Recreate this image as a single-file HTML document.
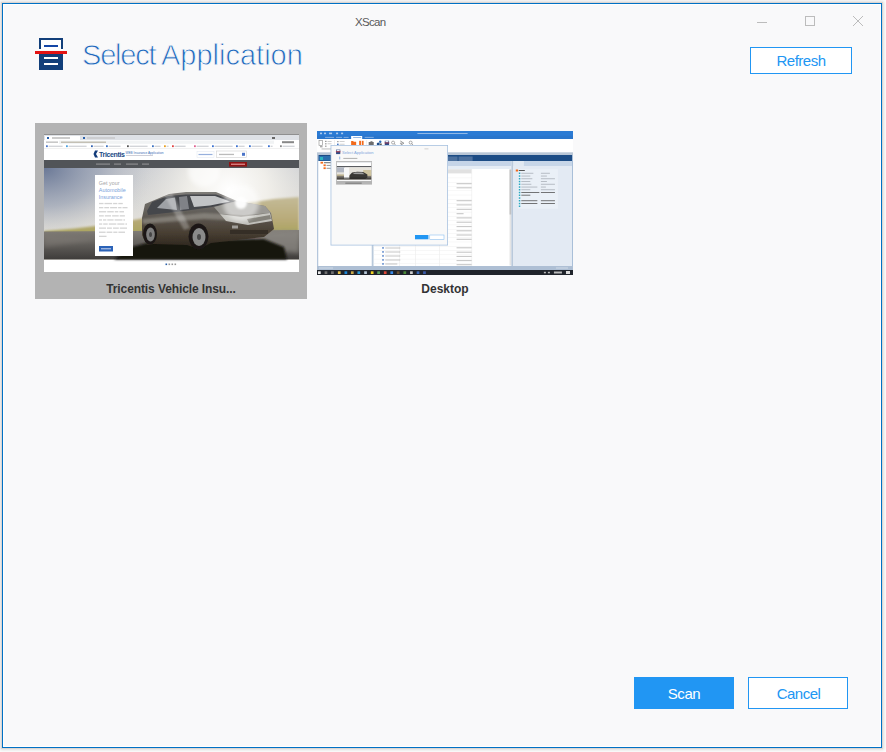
<!DOCTYPE html>
<html><head><meta charset="utf-8">
<style>
*{margin:0;padding:0;box-sizing:border-box}
html,body{width:886px;height:752px;overflow:hidden;background:#fdfdfd;font-family:"Liberation Sans",sans-serif}
.abs{position:absolute}
#win{position:absolute;left:2px;top:3px;width:880px;height:745px;border:1px solid #0071c5;background:#f9f9fa;box-shadow:0 0 0 1px #dcd6d2,0 0 3px 2px rgba(0,0,0,0.13)}
#inner{position:absolute;left:0;top:0;right:0;bottom:0;border:1px solid #fff}
.title{position:absolute;left:0;top:13px;width:100%;text-align:center;font-size:11px;color:#666}
.ctl{position:absolute;background:transparent}
.btn{position:absolute;border:1px solid #2196f3;background:#fff;color:#2196f3;font-size:15px;text-align:center}
.btnp{background:#2196f3;color:#fff}
.tile{position:absolute;background:#b3b3b3}
.lbl{position:absolute;font-weight:bold;font-size:12px;color:#333;text-align:center}
</style></head><body>
<div id="win"><div id="inner"></div></div>
<div class="abs m" style="left:355px;top:16px;font-size:11.5px;letter-spacing:-0.7px;color:#5a5a5a;white-space:nowrap">XScan</div>
<!-- window controls -->
<div class="abs" style="left:757px;top:22px;width:10px;height:1px;background:#bcbcbc"></div>
<div class="abs" style="left:805px;top:16px;width:10px;height:10px;border:1px solid #bcbcbc"></div>
<svg class="abs" style="left:852px;top:15px" width="12" height="12" viewBox="0 0 12 12"><path d="M1 1L11 11M11 1L1 11" stroke="#bcbcbc" stroke-width="1"/></svg>
<!-- icon -->
<svg class="abs" style="left:35px;top:38px" width="32" height="32" viewBox="0 0 32 32">
<rect x="4" y="0" width="24" height="12" fill="#fff"/>
<path d="M5 11V1H27V11" fill="none" stroke="#123f7a" stroke-width="2"/>
<rect x="9" y="7" width="14" height="2" fill="#1446a6"/>
<rect x="0" y="13" width="32" height="3" fill="#e31313"/>
<rect x="4" y="16" width="24" height="16" fill="#123f7a"/>
<rect x="9" y="19" width="14" height="2" fill="#fff"/>
<rect x="9" y="25" width="14" height="2" fill="#fff"/>
</svg>
<div class="abs m" id="ttl" style="left:82px;top:39px;font-size:29px;color:#1f68bd;white-space:nowrap;-webkit-text-stroke:0.8px #f9f9fa"><span style="letter-spacing:-1.2px">Select</span></div>
<div class="abs m" id="ttl2" style="left:161px;top:39px;font-size:29px;color:#1f68bd;white-space:nowrap;-webkit-text-stroke:0.8px #f9f9fa;letter-spacing:0px">Application</div>
<div class="btn m" style="left:750px;top:47px;width:102px;height:27px;line-height:25px;letter-spacing:-0.5px">Refresh</div>

<!-- tile 1 -->
<div class="tile" style="left:35px;top:123px;width:272px;height:176px"></div>
<svg class="abs" style="left:44px;top:134px" width="255" height="138" viewBox="0 -1 255 138">
<rect x="0" y="-1" width="255" height="1" fill="#8f8f8f"/>
<defs>
<linearGradient id="sky" x1="0" y1="0" x2="0" y2="1">
<stop offset="0" stop-color="#c9ccd2"/><stop offset="0.6" stop-color="#e2e0da"/><stop offset="1" stop-color="#ece6d6"/>
</linearGradient>
<radialGradient id="skyl" cx="0" cy="33" r="110" gradientUnits="userSpaceOnUse" gradientTransform="translate(0 33) scale(1 0.7) translate(0 -33)">
<stop offset="0" stop-color="#6a7896" stop-opacity="1"/><stop offset="0.5" stop-color="#8e98ad" stop-opacity="0.6"/><stop offset="1" stop-color="#c8c8c8" stop-opacity="0"/>
</radialGradient>
<radialGradient id="sun" cx="185" cy="55" r="95" gradientUnits="userSpaceOnUse">
<stop offset="0" stop-color="#ffffff" stop-opacity="1"/><stop offset="0.4" stop-color="#f6f4ee" stop-opacity="0.85"/><stop offset="1" stop-color="#eeeae0" stop-opacity="0"/>
</radialGradient>
<linearGradient id="road" x1="0" y1="0" x2="0" y2="1">
<stop offset="0" stop-color="#827e78"/><stop offset="1" stop-color="#3e3c3a"/>
</linearGradient>
<linearGradient id="hill" x1="0" y1="0" x2="0" y2="1">
<stop offset="0" stop-color="#c4bb98"/><stop offset="0.6" stop-color="#b8aa78"/><stop offset="1" stop-color="#a9a45c"/>
</linearGradient>
<linearGradient id="body" x1="0" y1="0" x2="0" y2="1">
<stop offset="0" stop-color="#7e7c78"/><stop offset="0.4" stop-color="#5e5a54"/><stop offset="0.7" stop-color="#4a4034"/><stop offset="1" stop-color="#2a231b"/>
</linearGradient>
<clipPath id="heroclip"><rect x="0" y="33.2" width="255" height="91.3"/></clipPath>
<filter id="bl0"><feGaussianBlur stdDeviation="0.45"/></filter>
<filter id="bl1"><feGaussianBlur stdDeviation="0.8"/></filter>
<filter id="bl2"><feGaussianBlur stdDeviation="2"/></filter>
</defs>
<rect width="255" height="137" fill="#fff"/>
<!-- tab strip -->
<rect x="0" y="0" width="255" height="5" fill="#dee1e6"/>

<rect x="1" y="1" width="35" height="4" fill="#fff"/>
<rect x="3" y="2" width="2" height="2" fill="#2a5fa8"/>
<rect x="8" y="2.5" width="18" height="1" fill="#999"/>
<rect x="39" y="2" width="2" height="2" fill="#2a5fa8"/>
<rect x="43" y="2.5" width="28" height="1" fill="#bbb"/>
<rect x="228" y="2" width="3" height="2" fill="#666"/>
<!-- address row -->
<rect x="0" y="5" width="255" height="4.5" fill="#fff"/>
<rect x="2" y="6.5" width="12" height="1.3" fill="#bbb"/>
<rect x="15" y="5.6" width="215" height="3.2" fill="#f1f3f4"/>
<rect x="17" y="6.6" width="45" height="1.2" fill="#b9b4a6"/>
<rect x="238" y="6.2" width="12" height="2" fill="#888"/>
<!-- bookmarks -->
<rect x="2" y="10.3" width="1.8" height="1.8" fill="#4a74c8"/>
<rect x="4.6" y="10.7" width="14" height="1.1" fill="#9aa0aa" opacity="0.55"/>
<rect x="22" y="10.3" width="1.8" height="1.8" fill="#4aa0e0"/>
<rect x="24.6" y="10.7" width="18" height="1.1" fill="#9aa0aa" opacity="0.55"/>
<rect x="47" y="10.3" width="1.8" height="1.8" fill="#3060b0"/>
<rect x="49.6" y="10.7" width="10" height="1.1" fill="#9aa0aa" opacity="0.55"/>
<rect x="62" y="10.3" width="1.8" height="1.8" fill="#3a70c0"/>
<rect x="64.6" y="10.7" width="12" height="1.1" fill="#9aa0aa" opacity="0.55"/>
<rect x="83" y="10.3" width="1.8" height="1.8" fill="#555"/>
<rect x="85.6" y="10.7" width="18" height="1.1" fill="#9aa0aa" opacity="0.55"/>
<rect x="108" y="10.3" width="1.8" height="1.8" fill="#3a70c0"/>
<rect x="110.6" y="10.7" width="6" height="1.1" fill="#9aa0aa" opacity="0.55"/>
<rect x="120" y="10.3" width="1.8" height="1.8" fill="#e8a020"/>
<rect x="122.6" y="10.7" width="2" height="1.1" fill="#9aa0aa" opacity="0.55"/>
<rect x="128" y="10.3" width="1.8" height="1.8" fill="#e04040"/>
<rect x="130.6" y="10.7" width="11" height="1.1" fill="#9aa0aa" opacity="0.55"/>
<rect x="150" y="10.3" width="1.8" height="1.8" fill="#e06090"/>
<rect x="152.6" y="10.7" width="12" height="1.1" fill="#9aa0aa" opacity="0.55"/>
<rect x="168" y="10.3" width="1.8" height="1.8" fill="#3a70d0"/>
<rect x="170.6" y="10.7" width="18" height="1.1" fill="#9aa0aa" opacity="0.55"/>
<rect x="192" y="10.3" width="1.8" height="1.8" fill="#3a70d0"/>
<rect x="194.6" y="10.7" width="6" height="1.1" fill="#9aa0aa" opacity="0.55"/>
<rect x="205" y="10.3" width="1.8" height="1.8" fill="#3a70d0"/>
<rect x="207.6" y="10.7" width="11" height="1.1" fill="#9aa0aa" opacity="0.55"/>
<rect x="224" y="10.3" width="1.8" height="1.8" fill="#3a70d0"/>
<rect x="226.6" y="10.7" width="2" height="1.1" fill="#9aa0aa" opacity="0.55"/>
<rect x="236" y="10.3" width="1.8" height="1.8" fill="#888"/>
<rect x="238.6" y="10.7" width="12" height="1.1" fill="#9aa0aa" opacity="0.55"/>
<rect x="0" y="13.3" width="255" height="0.5" fill="#e2e2e2"/>
<!-- header -->
<path d="M51 15.5 L54 15.5 L52 19 L54 22.5 L51 22.5 L49.5 19 Z" fill="#123b7a"/>
<text x="55" y="21.8" font-family="Liberation Sans" font-weight="bold" font-size="7" fill="#1b4a86" letter-spacing="-0.35">Tricentis</text>
<text x="81.5" y="18.6" font-family="Liberation Sans" font-size="3.15" fill="#3b6cb5">WEB Insurance Application</text>
<rect x="82" y="20" width="27" height="0.8" fill="#aab" opacity="0.7"/>
<rect x="153" y="16.5" width="17" height="6" fill="#fff" stroke="#dfe6f0" stroke-width="0.5"/>
<rect x="154.5" y="18.9" width="14" height="1.2" fill="#6b8fcf" opacity="0.7"/>
<rect x="172.5" y="16" width="30" height="6.5" fill="#fff" stroke="#d0d0d0" stroke-width="0.6"/>
<rect x="175" y="18.8" width="15" height="1.3" fill="#bbb"/>
<rect x="198" y="17.8" width="3" height="3" fill="#4a74c8"/>
<!-- nav -->
<rect x="0" y="25" width="255" height="8.2" fill="#515458"/>
<rect x="52" y="28.5" width="14" height="1.2" fill="#a4a4a4" opacity="0.7"/>
<rect x="70" y="28.5" width="7" height="1.2" fill="#a4a4a4" opacity="0.7"/>
<rect x="82" y="28.5" width="12" height="1.2" fill="#a4a4a4" opacity="0.7"/>
<rect x="98" y="28.5" width="7" height="1.2" fill="#a4a4a4" opacity="0.7"/>
<rect x="185" y="27" width="18" height="4.6" fill="#8e1414"/>
<rect x="187" y="28.6" width="14" height="1.3" fill="#d88"/>
<!-- hero -->
<rect x="0" y="33" width="255" height="91.5" fill="url(#sky)"/>
<rect x="0" y="33" width="255" height="91.5" fill="url(#skyl)"/>
<rect x="0" y="33" width="255" height="91.5" fill="url(#sun)"/>
<path d="M0 96 L30 93.5 L60 90 L95 84 L140 76 L190 70 L230 64 L255 62 L255 100 L0 100 Z" fill="url(#hill)" filter="url(#bl1)"/>

<path d="M0 96.5 L255 95 L255 124.5 L0 124.5 Z" fill="url(#road)"/>
<path d="M160 97 L255 96 L255 118 L200 112Z" fill="#8d8a85" opacity="0.7" filter="url(#bl2)"/>
<path d="M0 100 L60 104 L0 112Z" fill="#8a8580" opacity="0.4" filter="url(#bl2)"/>
<!-- car shadow -->
<path d="M88 112 L110 106 L220 104 L240 112 L243 124.5 L70 124.5 Z" fill="#161310" filter="url(#bl1)"/>
<g filter="url(#bl0)">
<!-- car body -->
<path d="M98 83 L101 69 L125 59 L142 57 L172 57 L193 66 L221 71 L227 78 L230 94 L220 102 L167 108 L155 114 L143 110 L110 109 L103 110 L98 100 Z" fill="url(#body)"/>
<path d="M98 84 L160 78 L200 80 L227 78 L228 84 L200 86 L160 84 L99 89Z" fill="#a8a59e" opacity="0.5" filter="url(#bl1)"/>
<!-- windows -->
<path d="M103 76 L108 67 L124 61 L142 59.5 L172 59.5 L191 66.5 L168 72 L140 76 L104 80 Z" fill="#45474c"/>
<path d="M146 61 L171 61 L186 66.5 L166 70.5 L150 72Z" fill="#d8dadc" opacity="0.85"/>
<path d="M113 73 L122 64 L131 62.5 L133 75Z" fill="#c5c8cc" opacity="0.7"/>
<path d="M135 62 L143 61 L145 74 L136 75Z" fill="#8e9196" opacity="0.8"/>
<!-- hood / front -->
<path d="M170 72 L193 66 L221 71 L227 78 L200 80 L176 79Z" fill="#a09e9a" opacity="0.9"/>
<path d="M176 79 L197 82 L226 78 L228 86 L204 90 L182 86Z" fill="#d4d3cf" opacity="0.85"/>
<path d="M203 84 L226 80 L227 84 L205 88Z" fill="#6a665e" opacity="0.7"/>
<rect x="186" y="95" width="38" height="4" fill="#2f2a24" opacity="0.8"/>
<rect x="188" y="90.5" width="6" height="3" fill="#d8d8d8" opacity="0.6"/>
<!-- wheels -->
<ellipse cx="106" cy="99" rx="7" ry="10.5" fill="#1b1916"/>
<ellipse cx="106.5" cy="99.5" rx="4.3" ry="7" fill="#7e7e7e"/>
<ellipse cx="106.5" cy="99.5" rx="1.5" ry="2.5" fill="#444"/>
<ellipse cx="154.5" cy="101.5" rx="10" ry="13" fill="#1b1916"/>
<ellipse cx="155" cy="102" rx="6.5" ry="9" fill="#8a8a8a"/>
<ellipse cx="155" cy="102" rx="2" ry="3" fill="#4a4a4a"/>
</g>
<g clip-path="url(#heroclip)">
<!-- glare -->
<circle cx="160" cy="36" r="16" fill="#fff" opacity="0.6" filter="url(#bl2)"/>
<circle cx="197" cy="68" r="18" fill="#fff" opacity="0.5" filter="url(#bl2)"/>
<circle cx="197" cy="68" r="6" fill="#fff" opacity="0.95" filter="url(#bl1)"/>
<path d="M120 60 L140 95 L146 93 L128 58Z" fill="#fff" opacity="0.25" filter="url(#bl1)"/>
</g>
<!-- card -->
<rect x="51" y="40" width="38" height="81" fill="#fff"/>
<text x="54.8" y="49.5" font-family="Liberation Sans" font-size="5.4" fill="#a5a5a5">Get your</text>
<text x="54.8" y="56.5" font-family="Liberation Sans" font-size="5.4" fill="#7ba2da">Automobile</text>
<text x="54.8" y="63.5" font-family="Liberation Sans" font-size="5.4" fill="#7ba2da">Insurance</text>
<g fill="#9a9a9a" opacity="0.42">
<rect x="55.0" y="67.9" width="4.5" height="1.3"/>
<rect x="60.5" y="67.9" width="7.6" height="1.3"/>
<rect x="69.1" y="67.9" width="4.2" height="1.3"/>
<rect x="74.3" y="67.9" width="4.5" height="1.3"/>
<rect x="55.0" y="72.0" width="4.3" height="1.3"/>
<rect x="60.3" y="72.0" width="4.8" height="1.3"/>
<rect x="66.1" y="72.0" width="7.0" height="1.3"/>
<rect x="74.1" y="72.0" width="3.4" height="1.3"/>
<rect x="78.5" y="72.0" width="5.0" height="1.3"/>
<rect x="55.0" y="76.1" width="7.2" height="1.3"/>
<rect x="63.2" y="76.1" width="6.6" height="1.3"/>
<rect x="70.8" y="76.1" width="3.5" height="1.3"/>
<rect x="75.4" y="76.1" width="4.6" height="1.3"/>
<rect x="55.0" y="80.2" width="4.8" height="1.3"/>
<rect x="60.8" y="80.2" width="6.2" height="1.3"/>
<rect x="68.1" y="80.2" width="6.6" height="1.3"/>
<rect x="75.7" y="80.2" width="5.2" height="1.3"/>
<rect x="55.0" y="84.3" width="3.0" height="1.3"/>
<rect x="59.0" y="84.3" width="3.3" height="1.3"/>
<rect x="63.3" y="84.3" width="6.3" height="1.3"/>
<rect x="70.6" y="84.3" width="7.8" height="1.3"/>
<rect x="79.4" y="84.3" width="1.6" height="1.3"/>
<rect x="55.0" y="88.4" width="3.2" height="1.3"/>
<rect x="59.2" y="88.4" width="4.5" height="1.3"/>
<rect x="64.8" y="88.4" width="7.5" height="1.3"/>
<rect x="73.3" y="88.4" width="7.1" height="1.3"/>
<rect x="81.4" y="88.4" width="1.6" height="1.3"/>
<rect x="55.0" y="92.5" width="7.0" height="1.3"/>
<rect x="63.0" y="92.5" width="4.9" height="1.3"/>
<rect x="69.0" y="92.5" width="5.8" height="1.3"/>
<rect x="75.8" y="92.5" width="7.2" height="1.3"/>
<rect x="55.0" y="96.6" width="6.6" height="1.3"/>
<rect x="62.6" y="96.6" width="5.7" height="1.3"/>
<rect x="69.3" y="96.6" width="4.1" height="1.3"/>
<rect x="74.4" y="96.6" width="6.6" height="1.3"/>
<rect x="55.0" y="100.7" width="7.5" height="1.3"/>
</g>
<rect x="55" y="111" width="14" height="5.5" fill="#2c63b8"/>
<rect x="57" y="113.3" width="10" height="1" fill="#cdd8ee"/>
<!-- footer dots -->
<rect x="121.5" y="128.5" width="1.6" height="1.6" fill="#2a5fa8"/>
<rect x="124.5" y="128.5" width="1.6" height="1.6" fill="#999"/>
<rect x="127.5" y="128.5" width="1.6" height="1.6" fill="#999"/>
<rect x="130.5" y="128.5" width="1.6" height="1.6" fill="#999"/>
</svg>

<div class="lbl m" style="left:35px;top:282px;width:272px;letter-spacing:-0.1px">Tricentis Vehicle Insu...</div>

<!-- tile 2 -->
<svg class="abs" style="left:317px;top:131px" width="256" height="144" viewBox="0 0 255 144" preserveAspectRatio="none">
<rect width="255" height="144" fill="#fff"/>
<!-- title bar -->
<rect x="0" y="0" width="255" height="8" fill="#2b7bd4"/>
<rect x="0" y="4.8" width="255" height="3.2" fill="#2a76cc"/>
<rect x="34" y="5" width="11" height="3" fill="#fff"/>
<g fill="#cfe0f5" opacity="0.8"><rect x="3" y="1.6" width="2" height="1.6"/><rect x="7" y="1.6" width="2" height="1.6"/><rect x="12" y="1.6" width="3" height="1.6"/><rect x="19" y="1.6" width="2" height="1.6"/><rect x="24" y="1.6" width="2" height="1.6"/></g>
<rect x="100" y="2" width="50" height="1" fill="#bcd3f0" opacity="0.7"/>
<g fill="#cfe0f5" opacity="0.6"><rect x="8" y="5.9" width="9" height="0.9"/><rect x="19" y="5.9" width="6" height="0.9"/><rect x="26.5" y="5.9" width="5" height="0.9"/><rect x="47.5" y="5.9" width="9" height="0.9"/></g><rect x="36" y="6" width="8" height="0.8" fill="#7aa6dc"/>
<!-- ribbon -->
<rect x="0" y="8" width="255" height="13.3" fill="#fff"/>
<rect x="2" y="9.3" width="3.5" height="5" fill="none" stroke="#8a8a8a" stroke-width="0.6"/>
<rect x="3" y="14.8" width="2.5" height="1.6" fill="#aaa"/>
<g fill="#9a9a9a"><rect x="8" y="9.8" width="1.5" height="1.2"/><rect x="8" y="12.2" width="1.5" height="1.2"/><rect x="8" y="14.6" width="1.5" height="1.2"/><rect x="10.5" y="10" width="4" height="0.8" opacity="0.6"/><rect x="10.5" y="12.4" width="4" height="0.8" opacity="0.6"/></g>
<rect x="4.5" y="17.5" width="10" height="0.9" fill="#b5b5b5"/>
<g fill="#e2e2e2"><rect x="17" y="9" width="0.5" height="11"/><rect x="49" y="9" width="0.5" height="6"/><rect x="71" y="9" width="0.5" height="6"/></g>
<g fill="#a0a0a0"><rect x="20" y="10" width="1.5" height="1.2"/><rect x="22.5" y="10.2" width="5" height="0.8" opacity="0.6"/><rect x="20" y="12.6" width="1.5" height="1.5" fill="#3a6fc0"/><rect x="22.5" y="12.8" width="5" height="0.8" opacity="0.6"/></g>
<path d="M34 10 L36 10 L36.6 10.8 L39 10.8 L39 14.3 L34 14.3Z" fill="#f26a1b"/>
<rect x="42" y="9.8" width="1.8" height="4.5" fill="#f26a1b"/><rect x="44.6" y="9.8" width="1.8" height="4.5" fill="#f26a1b"/>
<path d="M51.5 11 L53 11 L53.5 10.2 L55 10.2 L55.5 11 L56.5 11 L56.5 14.3 L51.5 14.3Z" fill="#6e6e6e"/>
<circle cx="61" cy="13" r="1.5" fill="#1f4e8a"/><circle cx="63" cy="10.8" r="1.2" fill="#2a6ab8"/><rect x="62.5" y="12.5" width="2" height="2" fill="#555"/>
<rect x="67.5" y="9.8" width="4.3" height="4.6" fill="#2d4e8a"/><rect x="67.3" y="11.6" width="4.7" height="0.7" fill="#d82020"/><rect x="68.2" y="10" width="2.9" height="1.2" fill="#e8eef8"/>
<circle cx="75.8" cy="11.6" r="1.5" fill="none" stroke="#777" stroke-width="0.6"/><path d="M76.8 12.6 L78.6 14.4" stroke="#777" stroke-width="0.7"/>
<path d="M83 10 L86.5 12.2 L83 14.4" fill="none" stroke="#777" stroke-width="0.8"/><rect x="82.6" y="11.8" width="2" height="0.8" fill="#777"/>
<circle cx="93.3" cy="11.6" r="1.5" fill="none" stroke="#777" stroke-width="0.6"/><path d="M94.3 12.6 L96.1 14.4" stroke="#777" stroke-width="0.7"/>
<!-- gray band -->
<rect x="0" y="21.3" width="255" height="2.8" fill="#b9c6d6"/>
<!-- navy bar -->
<rect x="1" y="24" width="254" height="6" fill="#1c4c85"/>
<rect x="130" y="25.5" width="10" height="4.5" fill="#5a7ba4" opacity="0.8"/>
<rect x="141" y="25.5" width="14" height="4.5" fill="#5a7ba4" opacity="0.8"/>
<!-- left panel -->
<rect x="0" y="24" width="1.5" height="111" fill="#b4c6dc"/>
<rect x="1.5" y="30" width="53.5" height="105" fill="#fff"/>
<rect x="2" y="25" width="11" height="4.5" fill="#2a6fae"/>
<rect x="3" y="26" width="3" height="3" fill="#2bb3c0"/>
<rect x="3.5" y="30.8" width="2.6" height="1.8" fill="#f26a1b"/>
<rect x="7" y="31.3" width="7" height="0.9" fill="#555"/>
<rect x="6.5" y="33.4" width="2.2" height="1.8" fill="#f26a1b"/><rect x="9.5" y="33.9" width="5" height="0.9" fill="#888"/>
<rect x="6.5" y="36.3" width="2.2" height="1.8" fill="#f26a1b"/><rect x="9.5" y="36.8" width="5" height="0.9" fill="#888"/>
<!-- separator -->
<rect x="54.5" y="30" width="2" height="105" fill="#b9c9db"/>
<!-- center grid -->
<rect x="56.5" y="30" width="137" height="5" fill="#c6d5e8"/>
<rect x="56.5" y="35" width="137" height="3.2" fill="#e6edf5"/>
<rect x="56.5" y="38.2" width="137" height="96.8" fill="#fff"/>
<rect x="122" y="38.2" width="32" height="4" fill="#e1e1e1"/>
<g fill="#e8e8e8"><rect x="82" y="38" width="0.5" height="97"/><rect x="98" y="38" width="0.5" height="97"/><rect x="122" y="38" width="0.5" height="97"/><rect x="154" y="38" width="0.5" height="97"/></g>
<g fill="#ececec">
<rect x="56.5" y="38.20" width="98" height="0.4"/>
<rect x="56.5" y="42.47" width="98" height="0.4"/>
<rect x="56.5" y="46.74" width="98" height="0.4"/>
<rect x="56.5" y="51.01" width="98" height="0.4"/>
<rect x="56.5" y="55.28" width="98" height="0.4"/>
<rect x="56.5" y="59.55" width="98" height="0.4"/>
<rect x="56.5" y="63.82" width="98" height="0.4"/>
<rect x="56.5" y="68.09" width="98" height="0.4"/>
<rect x="56.5" y="72.36" width="98" height="0.4"/>
<rect x="56.5" y="76.63" width="98" height="0.4"/>
<rect x="56.5" y="80.90" width="98" height="0.4"/>
<rect x="56.5" y="85.17" width="98" height="0.4"/>
<rect x="56.5" y="89.44" width="98" height="0.4"/>
<rect x="56.5" y="93.71" width="98" height="0.4"/>
<rect x="56.5" y="97.98" width="98" height="0.4"/>
<rect x="56.5" y="102.25" width="98" height="0.4"/>
<rect x="56.5" y="106.52" width="98" height="0.4"/>
<rect x="56.5" y="110.79" width="98" height="0.4"/>
<rect x="56.5" y="115.06" width="98" height="0.4"/>
<rect x="56.5" y="119.33" width="98" height="0.4"/>
<rect x="56.5" y="123.60" width="98" height="0.4"/>
<rect x="56.5" y="127.87" width="98" height="0.4"/>
<rect x="56.5" y="132.14" width="98" height="0.4"/>
</g>
<g fill="#7a7a7a" opacity="0.45">
<rect x="139" y="52.2" width="15" height="1"/>
<rect x="139" y="56.3" width="15" height="1"/>
<rect x="139" y="69.2" width="15" height="1"/>
<rect x="139" y="73.4" width="15" height="1"/>
<rect x="139" y="77.8" width="15" height="1"/>
<rect x="139" y="82.2" width="7" height="1"/>
<rect x="139" y="86.4" width="15" height="1"/>
<rect x="139" y="90.7" width="15" height="1"/>
<rect x="139" y="95.1" width="15" height="1"/>
<rect x="139" y="99.3" width="15" height="1"/>
<rect x="139" y="103.5" width="15" height="1"/>
<rect x="139" y="107.8" width="15" height="1"/>
<rect x="139" y="116.3" width="15" height="1"/>
<rect x="139" y="120.7" width="15" height="1"/>
<rect x="139" y="124.9" width="15" height="1"/>
<rect x="139" y="129.1" width="15" height="1"/>
<rect x="139" y="133.2" width="15" height="1"/>
</g>
<g fill="#8a8a8a" opacity="0.5">
<rect x="68" y="116.5" width="15" height="1"/><rect x="68" y="120.5" width="15" height="1"/><rect x="68" y="124.5" width="15" height="1"/><rect x="68" y="128.5" width="15" height="1"/><rect x="68" y="132.5" width="12" height="1"/>
</g>
<g fill="#3a6fc0" opacity="0.8">
<rect x="65" y="116" width="1.5" height="1.8"/><rect x="65" y="120" width="1.5" height="1.8"/><rect x="65" y="124" width="1.5" height="1.8"/><rect x="65" y="128" width="1.5" height="1.8"/><rect x="65" y="132" width="1.5" height="1.8"/>
</g>
<rect x="191.8" y="38.5" width="1.8" height="96" fill="#e4e4e4"/>
<rect x="191.8" y="38.5" width="1.8" height="45" fill="#c2c2c2"/>
<!-- right panel -->
<rect x="193.6" y="30" width="2" height="105" fill="#b9c9db"/>
<rect x="195.6" y="30" width="58.4" height="105" fill="#e3eaf3"/>
<rect x="195.6" y="30" width="58.4" height="5" fill="#c7d6e8"/>
<rect x="195.6" y="30" width="10.5" height="5" fill="#e1e9f2"/>
<rect x="200" y="38.2" width="40" height="39.5" fill="#eaf0f7"/>
<rect x="198" y="38.5" width="2.3" height="2" fill="#f26a1b"/>
<rect x="201" y="39" width="6" height="1" fill="#555"/>
<g fill="#2aa8c0">
<rect x="201" y="41.5" width="1.5" height="1.5"/><rect x="201" y="44.3" width="1.5" height="1.5"/><rect x="201" y="47" width="1.5" height="1.5"/><rect x="201" y="49.8" width="1.5" height="1.5"/><rect x="201" y="52.5" width="1.5" height="1.5"/><rect x="201" y="55.3" width="1.5" height="1.5"/><rect x="201" y="58" width="1.5" height="1.5"/><rect x="201" y="60.8" width="1.5" height="1.5"/><rect x="201" y="63.5" width="1.5" height="1.5"/><rect x="201" y="66.3" width="1.5" height="1.5"/><rect x="201" y="69" width="1.5" height="1.5"/><rect x="201" y="71.8" width="1.5" height="1.5"/><rect x="201" y="74.5" width="1.5" height="1.5"/>
</g>
<g fill="#9aa0a8" opacity="0.7">
<rect x="203.5" y="41.8" width="12" height="0.9"/><rect x="203.5" y="44.6" width="9" height="0.9"/><rect x="203.5" y="47.3" width="11" height="0.9"/><rect x="203.5" y="50.1" width="9" height="0.9"/><rect x="203.5" y="52.8" width="10" height="0.9"/><rect x="203.5" y="55.6" width="16" height="0.9"/><rect x="203.5" y="58.3" width="9" height="0.9"/>
<rect x="223" y="41.8" width="9" height="0.9"/><rect x="223" y="44.6" width="6" height="0.9"/><rect x="223" y="47.3" width="14" height="0.9"/><rect x="223" y="50.1" width="6" height="0.9"/><rect x="223" y="52.8" width="14" height="0.9"/><rect x="223" y="55.6" width="5" height="0.9"/><rect x="223" y="58.3" width="14" height="0.9"/>
</g>
<g fill="#555" opacity="0.8">
<rect x="203.5" y="61" width="18" height="1"/><rect x="203.5" y="63.7" width="9" height="1"/><rect x="203.5" y="69.2" width="16" height="1"/><rect x="203.5" y="72" width="16" height="1"/>
<rect x="223" y="61" width="14" height="1"/><rect x="223" y="69.2" width="14" height="1"/><rect x="223" y="72" width="14" height="1"/>
</g>
<rect x="254" y="24" width="1" height="111" fill="#a9bfd8"/>
<!-- status bar -->
<rect x="0" y="135" width="255" height="4" fill="#aebfd4"/>
<rect x="2" y="136.5" width="14" height="1" fill="#e8eef6" opacity="0.6"/>
<rect x="238" y="136.5" width="12" height="1" fill="#e8eef6" opacity="0.6"/>
<!-- taskbar -->
<rect x="0" y="139" width="255" height="5" fill="#20242b"/>
<rect x="1.0" y="140.3" width="2.7" height="2.7" fill="#e8e8e8"/>
<rect x="7.6" y="140.3" width="2.7" height="2.7" fill="#707070"/>
<rect x="14.0" y="140.3" width="2.7" height="2.7" fill="#707070"/>
<rect x="20.8" y="140.3" width="2.7" height="2.7" fill="#e8c048"/>
<rect x="27.4" y="140.3" width="2.7" height="2.7" fill="#1e88d8"/>
<rect x="33.8" y="140.3" width="2.7" height="2.7" fill="#c8a848"/>
<rect x="40.3" y="140.3" width="2.7" height="2.7" fill="#2a9ad8"/>
<rect x="47.0" y="140.3" width="2.7" height="2.7" fill="#b8c8d8"/>
<rect x="53.6" y="140.3" width="2.7" height="2.7" fill="#f0d020"/>
<rect x="60.0" y="140.3" width="2.7" height="2.7" fill="#5aa05a"/>
<rect x="66.6" y="140.3" width="2.7" height="2.7" fill="#e04838"/>
<rect x="73.1" y="140.3" width="2.7" height="2.7" fill="#3a8ae8"/>
<rect x="79.5" y="140.3" width="2.7" height="2.7" fill="#6a5030"/>
<rect x="86.1" y="140.3" width="2.7" height="2.7" fill="#4a8a3a"/>
<rect x="92.7" y="140.3" width="2.7" height="2.7" fill="#d0d0d0"/>
<rect x="99.3" y="140.3" width="2.7" height="2.7" fill="#3a6ab8"/>
<rect x="105.7" y="140.3" width="2.7" height="2.7" fill="#3a5aa8"/>
<g fill="#bbb"><rect x="226" y="140.8" width="2" height="1.5"/><rect x="230" y="140.8" width="2" height="1.5"/><rect x="236" y="140.5" width="8" height="2"/></g>
<rect x="248" y="140" width="4" height="3" fill="#ddd"/>
<!-- dialog -->
<rect x="13.5" y="14" width="117" height="100.5" fill="#a8c2e0"/>
<rect x="14.3" y="14.8" width="115.4" height="98.9" fill="#f9f9f9"/>
<rect x="107" y="17.5" width="4" height="0.8" fill="#c8c8c8"/>
<rect x="19" y="18.6" width="4.2" height="4.5" fill="#2d4e8a"/>
<rect x="19.6" y="18.9" width="3" height="1.4" fill="#e8eef8"/>
<rect x="18.8" y="20.5" width="4.6" height="0.7" fill="#d82020"/>
<text x="25" y="23.1" font-family="Liberation Sans" font-size="4.1" fill="#7fa6dc" letter-spacing="-0.05">Select Application</text>
<rect x="22" y="25.6" width="1.2" height="2.8" fill="#9fc0e6"/>
<rect x="26.2" y="26.9" width="14" height="1" fill="#b0b0b0"/>
<rect x="19" y="30.1" width="35.8" height="23.5" fill="#b4b4b4"/>
<rect x="19.8" y="31" width="34.2" height="18.9" fill="#fff"/>
<rect x="19.8" y="31" width="34.2" height="0.8" fill="#e2e4e8"/>
<rect x="19.8" y="35" width="34.2" height="1.3" fill="#5a5c60"/>
<rect x="19.8" y="36.3" width="34.2" height="12.2" fill="#e6e3dc"/>
<rect x="19.8" y="36.3" width="8" height="5" fill="#9aa3b5" opacity="0.7"/>
<rect x="19.8" y="44.5" width="34.2" height="4" fill="#7a756e"/>
<rect x="19.8" y="43.5" width="7" height="1.2" fill="#b8ab80"/>
<rect x="46" y="39" width="8" height="6" fill="#c9bc90" opacity="0.8"/>
<rect x="26.9" y="36.7" width="5.1" height="11.2" fill="#f8f8f8"/>
<path d="M32.6 44 L35 41.5 L40 40.8 L46 41 L50.2 43.5 L50.2 46.5 L48 47.9 L33 47.9Z" fill="#3a3834"/>
<path d="M35.5 43 L38 41.4 L45 41.5 L47.5 43.2Z" fill="#b8b8b8" opacity="0.8"/>
<rect x="19.8" y="46.5" width="34.2" height="2" fill="#2a2826" opacity="0.6"/>
<rect x="28.2" y="51.6" width="16.3" height="1.2" fill="#555" opacity="0.55"/>
<rect x="97.6" y="104" width="13.4" height="4.3" fill="#2196f3"/>
<rect x="112.3" y="104" width="14.2" height="4.3" fill="#fff" stroke="#8cc0f0" stroke-width="0.6"/>
</svg>

<div class="lbl m" style="left:309px;top:282px;width:272px">Desktop</div>

<div class="btn btnp m" style="left:634px;top:677px;width:100px;height:32px;line-height:30px;padding-top:1px;letter-spacing:-0.4px">Scan</div>
<div class="btn m" style="left:748px;top:677px;width:100px;height:32px;line-height:30px;padding-top:1px;letter-spacing:-0.5px;padding-left:1px">Cancel</div>
</body></html>
